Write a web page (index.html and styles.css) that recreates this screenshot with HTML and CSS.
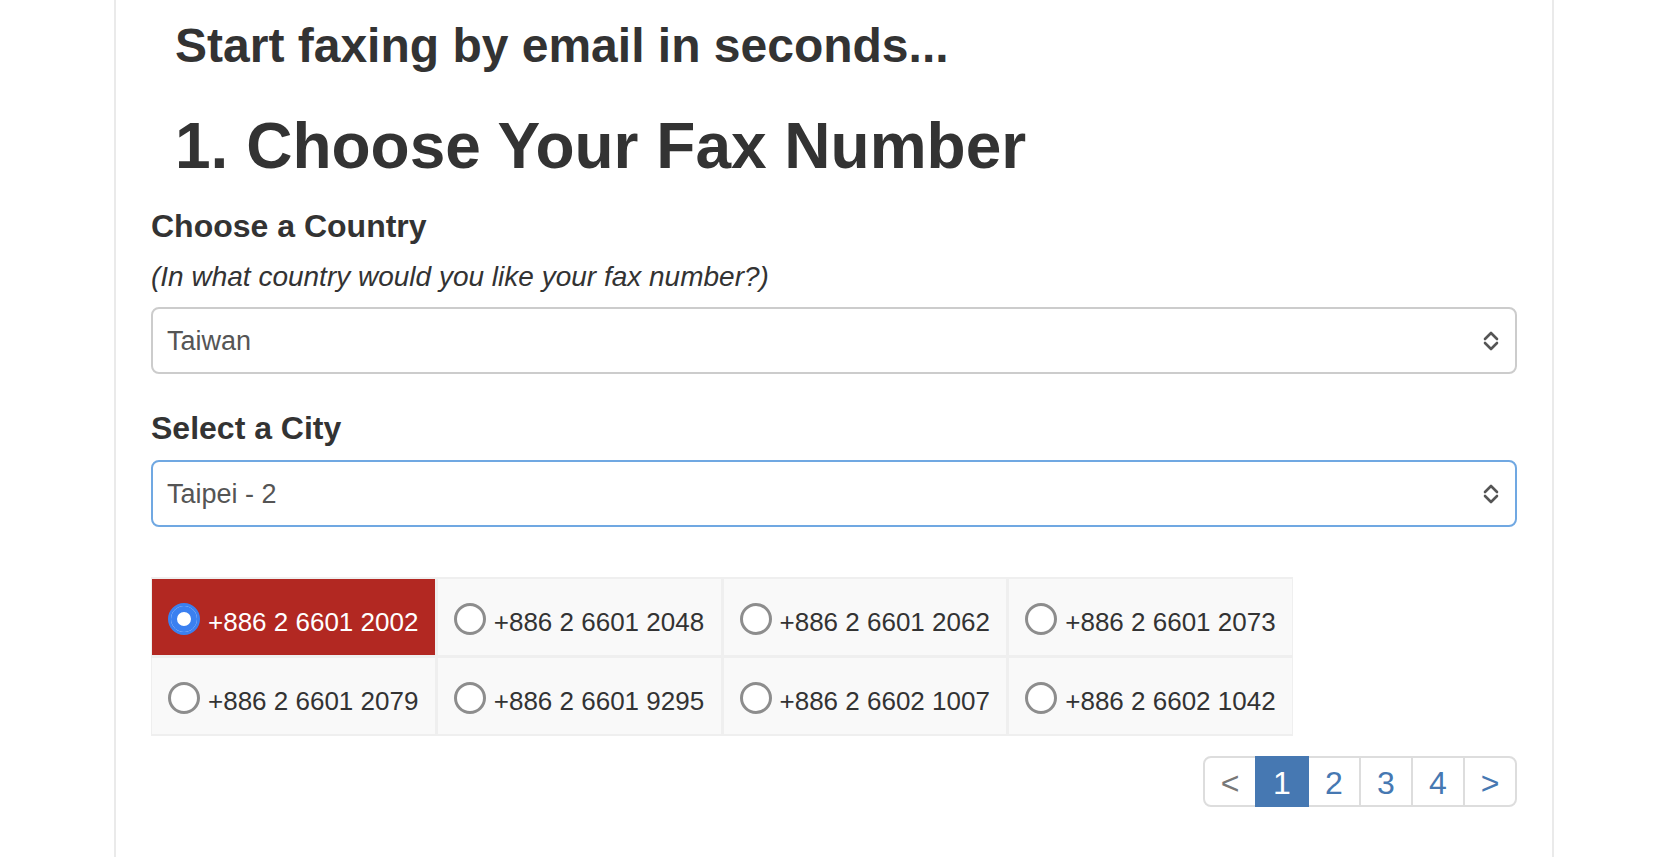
FILE: index.html
```html
<!DOCTYPE html>
<html lang="en">
<head>
<meta charset="utf-8">
<title>Choose Your Fax Number</title>
<link rel="stylesheet" href="styles.css">
</head>
<body>
<div class="panel">
  <h3 class="lead-title">Start faxing by email in seconds...</h3>
  <h1 class="step-title">1. Choose Your Fax Number</h1>

  <div class="field-label">Choose a Country</div>
  <p class="hint">(In what country would you like your fax number?)</p>
  <div class="select">
    <span class="select-value">Taiwan</span>
    <svg class="chevrons" width="16" height="20" viewBox="0 0 16 20"><path d="M2 8 L8 2 L14 8 M2 12 L8 18 L14 12" fill="none" stroke="#555" stroke-width="2.6" stroke-linecap="round" stroke-linejoin="round"/></svg>
  </div>

  <div class="field-label city-label">Select a City</div>
  <div class="select select-focus">
    <span class="select-value">Taipei - 2</span>
    <svg class="chevrons" width="16" height="20" viewBox="0 0 16 20"><path d="M2 8 L8 2 L14 8 M2 12 L8 18 L14 12" fill="none" stroke="#555" stroke-width="2.6" stroke-linecap="round" stroke-linejoin="round"/></svg>
  </div>

  <div class="numbers">
    <label class="num num-selected"><input type="radio" name="fax" checked><span>+886 2 6601 2002</span></label>
    <label class="num"><input type="radio" name="fax"><span>+886 2 6601 2048</span></label>
    <label class="num"><input type="radio" name="fax"><span>+886 2 6601 2062</span></label>
    <label class="num"><input type="radio" name="fax"><span>+886 2 6601 2073</span></label>
    <label class="num"><input type="radio" name="fax"><span>+886 2 6601 2079</span></label>
    <label class="num"><input type="radio" name="fax"><span>+886 2 6601 9295</span></label>
    <label class="num"><input type="radio" name="fax"><span>+886 2 6602 1007</span></label>
    <label class="num"><input type="radio" name="fax"><span>+886 2 6602 1042</span></label>
  </div>

  <div class="pager-row">
    <ul class="pager">
      <li class="pg pg-disabled">&lt;</li>
      <li class="pg pg-active">1</li>
      <li class="pg">2</li>
      <li class="pg">3</li>
      <li class="pg">4</li>
      <li class="pg">&gt;</li>
    </ul>
  </div>
</div>
</body>
</html>
```

FILE: styles.css
```css
* { box-sizing: border-box; }

html, body {
  margin: 0;
  padding: 0;
  background: #ffffff;
}

body {
  font-family: "Liberation Sans", Arial, Helvetica, sans-serif;
  color: #333333;
}

.panel {
  width: 1440px;
  min-height: 100vh;
  margin: 0 auto;
  border-left: 2px solid #eaeaea;
  border-right: 2px solid #eaeaea;
  padding: 19px 35px 0 35px;
}

.lead-title {
  margin: 0;
  padding-left: 24px;
  font-size: 48px;
  line-height: 53px;
  font-weight: bold;
  color: #333333;
}

.step-title {
  margin: 39px 0 0 0;
  padding-left: 24px;
  font-size: 64px;
  line-height: 70px;
  font-weight: bold;
  color: #333333;
}

.field-label {
  margin-top: 27px;
  font-size: 32px;
  line-height: 36px;
  font-weight: bold;
  color: #333333;
}

.city-label {
  margin-top: 36px;
}

.hint {
  margin: 17px 0 0 0;
  font-size: 28px;
  line-height: 32px;
  font-style: italic;
  color: #333333;
}

.select {
  margin-top: 14px;
  height: 67px;
  border: 2px solid #cccccc;
  border-radius: 8px;
  background: #ffffff;
  display: flex;
  align-items: center;
  justify-content: space-between;
  padding: 0 16px 0 14px;
}

.select-focus {
  border-color: #70a8e2;
}

.select-value {
  font-size: 27px;
  color: #555555;
  line-height: 32px;
}

.chevrons {
  display: block;
  flex: none;
}

.numbers {
  margin-top: 50px;
  width: 1142px;
  display: grid;
  grid-template-columns: repeat(4, 1fr);
  gap: 3px;
  padding: 2px 1px;
  background: #efefef;
}

.num {
  height: 76px;
  background: #f9f9f9;
  display: flex;
  align-items: center;
  padding: 11px 0 0 16px;
  font-size: 26px;
  color: #333333;
  cursor: pointer;
}

.num input {
  -webkit-appearance: none;
  appearance: none;
  width: 32px;
  height: 32px;
  margin: -7px 8px 0 0;
  border: 3px solid #8d8d8d;
  border-radius: 50%;
  background: #ffffff;
  flex: none;
}

.num input:checked {
  border-color: #3b80f0;
  box-shadow: inset 0 0 0 6px #3b80f0;
}

.num-selected {
  background: #b22822;
  color: #ffffff;
}

.pager-row {
  margin-top: 20px;
  display: flex;
  justify-content: flex-end;
}

.pager {
  list-style: none;
  margin: 0;
  padding: 0 0 0 2px;
  display: flex;
}

.pg {
  position: relative;
  width: 54px;
  height: 51px;
  margin-left: -2px;
  border: 2px solid #dddddd;
  background: #ffffff;
  color: #4678b2;
  font-size: 32px;
  display: flex;
  align-items: center;
  justify-content: center;
  padding-top: 3px;
}

.pg:first-child {
  border-radius: 8px 0 0 8px;
}

.pg:last-child {
  border-radius: 0 8px 8px 0;
}

.pg-disabled {
  color: #777777;
}

.pg-active {
  z-index: 2;
  background: #4678b2;
  border-color: #4678b2;
  color: #ffffff;
}
```
